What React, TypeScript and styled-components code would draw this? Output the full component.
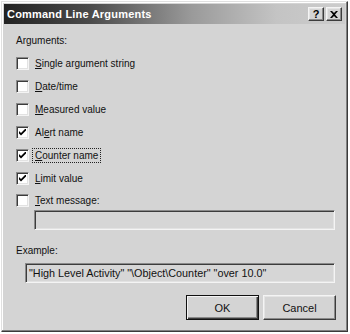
import * as React from 'react';
import styled, { createGlobalStyle, css } from 'styled-components';

const GlobalStyle = createGlobalStyle`
  html, body {
    margin: 0;
    padding: 0;
    background: #ffffff;
  }
  body {
    font-family: "Liberation Sans", Arial, sans-serif;
    font-size: 10px;
    color: #111111;
  }
`;

const raised = css`
  border-style: solid;
  border-width: 1px;
  border-color: #f4f4f4 #3c3c3c #3c3c3c #f4f4f4;
  box-shadow: inset -1px -1px 0 #8a8a8a, inset 1px 1px 0 #e4e4e4;
`;

const sunken = css`
  border-style: solid;
  border-width: 1px;
  border-color: #8a8a8a #f4f4f4 #f4f4f4 #8a8a8a;
  box-shadow: inset 1px 1px 0 #3c3c3c, inset -1px -1px 0 #e2e2e2;
`;

const Window = styled.div`
  box-sizing: border-box;
  margin: 1px 0 0 1px;
  width: 347px;
  height: 331px;
  background: #d4d4d4;
  border-style: solid;
  border-width: 1px;
  border-color: #e0e0e0 #3a3a3a #3a3a3a #e0e0e0;
  box-shadow: inset -1px -1px 0 #808080, inset 1px 1px 0 #ffffff;
  padding: 2px;
  display: flex;
  flex-direction: column;
`;

const TitleBar = styled.div`
  height: 20px;
  display: flex;
  align-items: center;
  padding: 0 3px;
  background: linear-gradient(90deg, #222222 0%, #4a4a4a 25%, #9a9a9a 55%, #c4c4c4 80%, #cccccc 100%);
`;

const Title = styled.span`
  flex: 1;
  color: #ffffff;
  font-weight: bold;
  font-size: 11px;
  letter-spacing: 0.2px;
`;

const TitleButton = styled.div<{ $gap?: number }>`
  ${raised};
  box-sizing: border-box;
  width: 16px;
  height: 14px;
  margin-left: ${({ $gap }) => $gap ?? 0}px;
  background: #d4d4d4;
  display: flex;
  align-items: center;
  justify-content: center;
  font-weight: bold;
  font-size: 11px;
  color: #000;
`;

const Body = styled.div`
  flex: 1;
  display: flex;
  flex-direction: column;
  padding: 10px 9px 0 12px;
`;

const Label = styled.div<{ $top?: number }>`
  line-height: 14px;
  margin-top: ${({ $top }) => $top ?? 0}px;
`;

const Options = styled.div`
  margin-top: 4px;
  display: flex;
  flex-direction: column;
`;

const Row = styled.label<{ $h?: number }>`
  height: ${({ $h }) => $h ?? 23}px;
  display: flex;
  align-items: center;
  gap: 4px;
`;

const Box = styled.span`
  ${sunken};
  box-sizing: border-box;
  width: 13px;
  height: 13px;
  background: #ffffff;
  display: flex;
  align-items: center;
  justify-content: center;
`;

const Text = styled.span<{ $focus?: boolean }>`
  padding: 0 2px;
  outline: ${({ $focus }) => ($focus ? '1px dotted #222' : 'none')};
  line-height: 13px;
`;

const Field = styled.div<{ $indent: number; $top?: number }>`
  ${sunken};
  box-sizing: border-box;
  margin-left: ${({ $indent }) => $indent}px;
  margin-right: 1px;
  margin-top: ${({ $top }) => $top ?? 0}px;
  height: 20px;
  background: #d6d6d6;
  padding: 0 3px;
  display: flex;
  align-items: center;
  white-space: nowrap;
  font-size: 10.8px;
`;

const Buttons = styled.div`
  margin-top: 12px;
  display: flex;
  justify-content: flex-end;
  gap: 4px;
`;

const Button = styled.div<{ $default?: boolean }>`
  box-sizing: border-box;
  width: 73px;
  height: 25px;
  background: #d4d4d4;
  display: flex;
  align-items: center;
  justify-content: center;
  font-size: 11px;
  ${({ $default }) =>
    $default
      ? css`
          border: 1px solid #111;
          box-shadow: inset 1px 1px 0 #f4f4f4, inset -1px -1px 0 #3c3c3c, inset -2px -2px 0 #8a8a8a;
        `
      : raised};
`;

const Check = (): JSX.Element => (
  <svg width="7" height="7" viewBox="0 0 7 7">
    <path d="M0 2 L0 4.5 L2 6.5 L7 1.5 L7 -1 L2 4 Z" fill="#000" />
  </svg>
);

const Close = (): JSX.Element => (
  <svg width="8" height="7" viewBox="0 0 8 7">
    <path d="M0 0 L2 0 L4 2 L6 0 L8 0 L5 3.5 L8 7 L6 7 L4 5 L2 7 L0 7 L3 3.5 Z" fill="#000" />
  </svg>
);

type Option = { pre: string; key: string; post: string; checked?: boolean; focus?: boolean };

const options: Option[] = [
  { pre: '', key: 'S', post: 'ingle argument string' },
  { pre: '', key: 'D', post: 'ate/time' },
  { pre: '', key: 'M', post: 'easured value' },
  { pre: 'Al', key: 'e', post: 'rt name', checked: true },
  { pre: '', key: 'C', post: 'ounter name', checked: true, focus: true },
  { pre: '', key: 'L', post: 'imit value', checked: true },
  { pre: '', key: 'T', post: 'ext message:' },
];

const App = (): JSX.Element => (
  <>
    <GlobalStyle />
    <Window>
      <TitleBar>
        <Title>Command Line Arguments</Title>
        <TitleButton>?</TitleButton>
        <TitleButton $gap={2}><Close /></TitleButton>
      </TitleBar>
      <Body>
        <Label>Arguments:</Label>
        <Options>
          {options.map((o, i) => (
            <Row key={o.post} $h={i === options.length - 1 ? 20 : 23}>
              <Box>{o.checked && <Check />}</Box>
              <Text $focus={o.focus}>
                {o.pre}<u>{o.key}</u>{o.post}
              </Text>
            </Row>
          ))}
        </Options>
        <Field $indent={18} />
        <Label $top={14}>Example:</Label>
        <Field $indent={9} $top={5}>
          "High Level Activity" "\Object\Counter" "over 10.0"
        </Field>
        <Buttons>
          <Button $default>OK</Button>
          <Button>Cancel</Button>
        </Buttons>
      </Body>
    </Window>
  </>
);

export default App;
